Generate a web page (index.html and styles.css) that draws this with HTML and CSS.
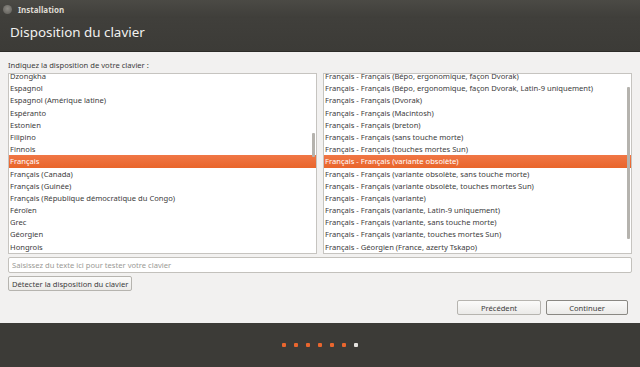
FILE: index.html
```html
<!DOCTYPE html>
<html lang="fr">
  <head>
    <meta charset="UTF-8" />
    <title>Installation</title>
    <link rel="stylesheet" href="styles.css">
  </head>
  <body>
    <div class="window">
      <div class="titlebar">
        <span class="close"></span>
        <span class="app-name">Installation</span>
      </div>
      <div class="header">
        <h1>Disposition du clavier</h1>
      </div>

      <div class="content">
        <p class="label">Indiquez la disposition de votre clavier :</p>

        <div class="lists">
          <div class="list">
            <div class="rows">
              <p class="row">Dzongkha</p>
              <p class="row">Espagnol</p>
              <p class="row">Espagnol (Amérique latine)</p>
              <p class="row">Espéranto</p>
              <p class="row">Estonien</p>
              <p class="row">Filipino</p>
              <p class="row">Finnois</p>
              <p class="row selected">Français</p>
              <p class="row">Français (Canada)</p>
              <p class="row">Français (Guinée)</p>
              <p class="row">Français (République démocratique du Congo)</p>
              <p class="row">Féroïen</p>
              <p class="row">Grec</p>
              <p class="row">Géorgien</p>
              <p class="row">Hongrois</p>
            </div>
            <div class="scrollbar left-thumb"><span class="thumb"></span></div>
          </div>

          <div class="list">
            <div class="rows">
              <p class="row">Français - Français (Bépo, ergonomique, façon Dvorak)</p>
              <p class="row">Français - Français (Bépo, ergonomique, façon Dvorak, Latin-9 uniquement)</p>
              <p class="row">Français - Français (Dvorak)</p>
              <p class="row">Français - Français (Macintosh)</p>
              <p class="row">Français - Français (breton)</p>
              <p class="row">Français - Français (sans touche morte)</p>
              <p class="row">Français - Français (touches mortes Sun)</p>
              <p class="row selected">Français - Français (variante obsolète)</p>
              <p class="row">Français - Français (variante obsolète, sans touche morte)</p>
              <p class="row">Français - Français (variante obsolète, touches mortes Sun)</p>
              <p class="row">Français - Français (variante)</p>
              <p class="row">Français - Français (variante, Latin-9 uniquement)</p>
              <p class="row">Français - Français (variante, sans touche morte)</p>
              <p class="row">Français - Français (variante, touches mortes Sun)</p>
              <p class="row">Français - Géorgien (France, azerty Tskapo)</p>
            </div>
            <div class="scrollbar right-thumb"><span class="thumb"></span></div>
          </div>
        </div>

        <input class="test-input" type="text" placeholder="Saisissez du texte ici pour tester votre clavier">
        <button class="btn detect">Détecter la disposition du clavier</button>

        <div class="actions">
          <button class="btn nav">Précédent</button>
          <button class="btn nav default">Continuer</button>
        </div>
      </div>

      <div class="footer">
        <span class="dot"></span>
        <span class="dot"></span>
        <span class="dot"></span>
        <span class="dot"></span>
        <span class="dot"></span>
        <span class="dot"></span>
        <span class="dot current"></span>
      </div>
    </div>
  </body>
</html>
```

FILE: styles.css
```css
body {
  margin: 0;
  font-family: "Noto Sans", "DejaVu Sans", sans-serif;
  background-color: #3c3b37;
}
.window {
  width: 640px;
  height: 367px;
  display: flex;
  flex-direction: column;
}
.titlebar {
  height: 18px;
  display: flex;
  align-items: center;
  gap: 6px;
  padding-left: 3px;
  background: linear-gradient(#4b4a45, #3f3e3a);
}
.close {
  width: 9px;
  height: 9px;
  border-radius: 50%;
  background: radial-gradient(circle at 50% 40%, #8d8b85, #5c5a55);
}
.app-name {
  font-size: 8px;
  font-weight: bold;
  color: #dfdbd2;
}
.header {
  height: 33px;
  background: linear-gradient(#403f3b, #3c3b37);
  border-bottom: 1px solid #2c2b28;
}
.header h1 {
  margin: 0;
  padding: 5px 0 0 10px;
  font-size: 13.4px;
  font-weight: normal;
  color: #f2f1f0;
}
.content {
  flex: 1;
  background-color: #f2f1f0;
  padding: 8px 8px 0;
  display: flex;
  flex-direction: column;
}
.label {
  margin: 0 0 3px;
  font-size: 7.6px;
  color: #3c3c3c;
}
.lists {
  display: flex;
  gap: 6px;
}
.list {
  flex: 1;
  height: 179px;
  border: 1px solid #c6c4c0;
  background-color: #ffffff;
  position: relative;
  overflow: hidden;
}
.rows {
  margin-top: -4px;
}
.row {
  margin: 0;
  height: 12.2px;
  line-height: 12.2px;
  padding-left: 1px;
  font-size: 7.6px;
  color: #3c3c3c;
  white-space: nowrap;
}
.row.selected {
  background: linear-gradient(#f07746, #e9652b);
  color: #ffffff;
}
.scrollbar {
  position: absolute;
  top: 0;
  right: 0;
  width: 4px;
  height: 100%;
}
.thumb {
  position: absolute;
  right: 1px;
  width: 3px;
  background-color: #b5b3ae;
  border-radius: 1px;
}
.left-thumb .thumb {
  top: 59px;
  height: 24px;
}
.right-thumb .thumb {
  top: 13px;
  height: 152px;
}
.test-input {
  margin-top: 3px;
  height: 16px;
  box-sizing: border-box;
  border: 1px solid #c3c1bc;
  border-radius: 2px;
  padding: 0 3px;
  font-family: inherit;
  font-size: 7.6px;
  background-color: #ffffff;
}
.test-input::placeholder {
  color: #9a9995;
}
.btn {
  font-family: inherit;
  font-size: 7.6px;
  color: #3c3c3c;
  height: 15px;
  padding: 0 3px;
  border: 1px solid #b6b4af;
  border-radius: 2px;
  background: linear-gradient(#fbfbfa, #ebeae8);
}
.detect {
  margin-top: 3px;
  align-self: flex-start;
}
.actions {
  display: flex;
  justify-content: flex-end;
  gap: 5px;
  margin-top: 9px;
  padding-right: 4px;
}
.nav {
  width: 84px;
}
.nav.default {
  width: 82px;
  border-color: #8a8883;
}
.footer {
  height: 44px;
  display: flex;
  justify-content: center;
  align-items: center;
  gap: 8px;
  background-color: #3c3b37;
}
.dot {
  width: 4px;
  height: 4px;
  border-radius: 1px;
  background-color: #e9662e;
}
.dot.current {
  background-color: #e5e3df;
}
```
